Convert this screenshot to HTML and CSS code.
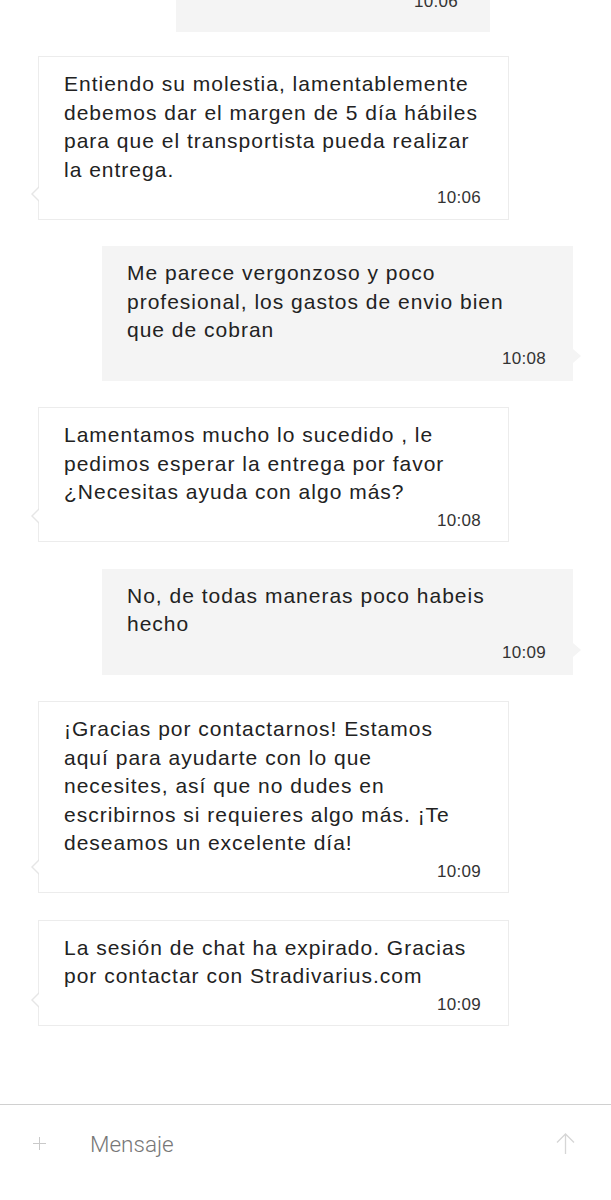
FILE: index.html
```html
<!DOCTYPE html>
<html lang="es">
<head>
  <meta charset="UTF-8" />
  <meta name="viewport" content="width=device-width, initial-scale=1" />
  <title>Chat</title>
  <link rel="stylesheet" href="styles.css">
</head>
<body>

  <div class="chat">
    <div class="bubble user cut">
      <div class="time">10:06</div>
    </div>

    <div class="bubble agent">
      <p>Entiendo su molestia, lamentablemente<br>debemos dar el margen de 5 día hábiles<br>para que el transportista pueda realizar<br>la entrega.</p>
      <div class="time">10:06</div>
    </div>

    <div class="bubble user">
      <p>Me parece vergonzoso y poco<br>profesional, los gastos de envio bien<br>que de cobran</p>
      <div class="time">10:08</div>
    </div>

    <div class="bubble agent">
      <p>Lamentamos mucho lo sucedido , le<br>pedimos esperar la entrega por favor<br>¿Necesitas ayuda con algo más?</p>
      <div class="time">10:08</div>
    </div>

    <div class="bubble user">
      <p>No, de todas maneras poco habeis<br>hecho</p>
      <div class="time">10:09</div>
    </div>

    <div class="bubble agent">
      <p>¡Gracias por contactarnos! Estamos<br>aquí para ayudarte con lo que<br>necesites, así que no dudes en<br>escribirnos si requieres algo más. ¡Te<br>deseamos un excelente día!</p>
      <div class="time">10:09</div>
    </div>

    <div class="bubble agent">
      <p>La sesión de chat ha expirado. Gracias<br>por contactar con Stradivarius.com</p>
      <div class="time">10:09</div>
    </div>
  </div>

  <footer class="composer">
    <span class="plus">
      <svg width="13" height="13" viewBox="0 0 13 13"><path d="M6.5 0v13M0 6.5h13" stroke="#c9c9c9" stroke-width="1" fill="none"/></svg>
    </span>
    <span class="placeholder">Mensaje</span>
    <span class="send">
      <svg width="19" height="21" viewBox="0 0 19 21"><path d="M9.5 21V1M1 9.5l8.5-8.5 8.5 8.5" stroke="#d6d6d6" stroke-width="1.3" fill="none"/></svg>
    </span>
  </footer>

</body>
</html>
```

FILE: styles.css
```css
body {
  margin: 0;
  min-height: 1200px;
  background: #fff;
  font-family: 'Liberation Sans', Arial, sans-serif;
  color: #222;
  display: flex;
  flex-direction: column;
}

.chat {
  flex: 1;
  display: flex;
  flex-direction: column;
}

.bubble {
  position: relative;
  box-sizing: border-box;
  width: 471px;
  padding: 13px 27px 12px 25px;
  margin-bottom: 26.5px;
}

.bubble p {
  margin: 0;
  font-size: 21px;
  line-height: 28.5px;
  letter-spacing: 1px;
  white-space: nowrap;
}

.time {
  margin-top: 4px;
  text-align: right;
  font-size: 17px;
  line-height: 20px;
  letter-spacing: 0.3px;
  color: #333;
}

.agent {
  margin-left: 38px;
  padding-top: 13px;
  padding-bottom: 10.5px;
  background: #fff;
  border: 1px solid #ececec;
}

.agent::before {
  content: "";
  position: absolute;
  left: -8px;
  bottom: 17px;
  border: 8px solid transparent;
  border-left: 0;
  border-right-color: #e6e6e6;
}

.agent::after {
  content: "";
  position: absolute;
  left: -6px;
  bottom: 18px;
  border: 7px solid transparent;
  border-left: 0;
  border-right-color: #fff;
}

.user {
  margin-left: 102px;
  background: #f4f4f4;
}

.user::after {
  content: "";
  position: absolute;
  right: -8px;
  bottom: 18px;
  border: 7px solid transparent;
  border-right: 0;
  border-left-color: #f4f4f4;
  border-left-width: 8px;
}

.user.cut {
  margin-left: 176px;
  width: 314px;
  height: 31.5px;
  padding: 0 32px 0 0;
  overflow: hidden;
  margin-bottom: 24.5px;
}

.user.cut::after {
  display: none;
}

.user.cut .time {
  margin-top: -8px;
}

.composer {
  box-sizing: border-box;
  height: 96px;
  border-top: 1.5px solid #d0d0d0;
  display: flex;
  align-items: center;
  padding: 0 36px 18px 33px;
  font-family: Roboto, 'Noto Sans', sans-serif;
}

.plus {
  display: flex;
  width: 57px;
}

.placeholder {
  flex: 1;
  font-size: 22.5px;
  font-weight: 300;
  color: #777;
}

.send {
  display: flex;
}
```
